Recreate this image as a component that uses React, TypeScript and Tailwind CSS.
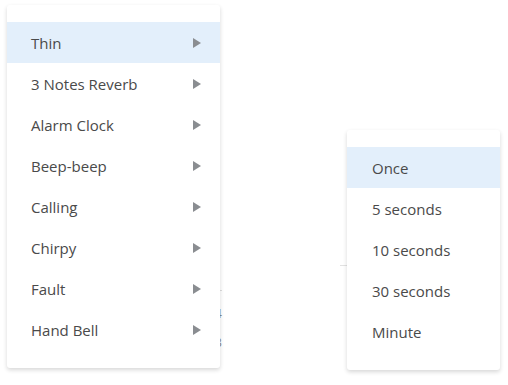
const sounds = ['Thin', '3 Notes Reverb', 'Alarm Clock', 'Beep-beep', 'Calling', 'Chirpy', 'Fault', 'Hand Bell']
const repeats = ['Once', '5 seconds', '10 seconds', '30 seconds', 'Minute']

function Arrow() {
  return (
    <svg width="8" height="10" viewBox="0 0 8 10" className="shrink-0">
      <polygon points="0,0 8,5 0,10" fill="#8a8d91" />
    </svg>
  )
}

export default function App() {
  return (
    <div className="relative w-[508px] h-[385px] overflow-hidden bg-white font-['Open_Sans',sans-serif] text-[15px] text-[#4a4a4a]">
      {/* bits of the page behind the menus */}
      <div className="absolute left-[214px] top-[290px] w-[8px] h-px bg-[#dedede]" />
      <div className="absolute left-[215px] top-[306px] text-[12px] leading-[16px] text-[#888]">4</div>
      <div className="absolute left-[215px] top-[335px] text-[12px] leading-[16px] text-[#888]">3</div>
      <div className="absolute left-[340px] top-[265px] w-[10px] h-px bg-[#e2e2e2]" />

      <div className="absolute left-[7px] top-[5px] w-[213px] rounded-[3px] bg-white pt-[17px] pb-[18px] shadow-[0_2px_4px_rgba(0,0,0,0.16)]">
        {sounds.map((s, i) => (
          <div
            key={s}
            className={`flex h-[41px] items-center justify-between pl-6 pr-[19px] ${i === 0 ? 'bg-[#e3effb]' : ''}`}
          >
            <span className="pt-[2px]">{s}</span>
            <Arrow />
          </div>
        ))}
      </div>

      <div className="absolute left-[347px] top-[130px] w-[153px] rounded-[3px] bg-white pt-[17px] pb-[18px] shadow-[0_2px_4px_rgba(0,0,0,0.16)]">
        {repeats.map((r, i) => (
          <div key={r} className={`flex h-[41px] items-center pl-[25px] pt-[2px] ${i === 0 ? 'bg-[#e3effb]' : ''}`}>
            {r}
          </div>
        ))}
      </div>
    </div>
  )
}
